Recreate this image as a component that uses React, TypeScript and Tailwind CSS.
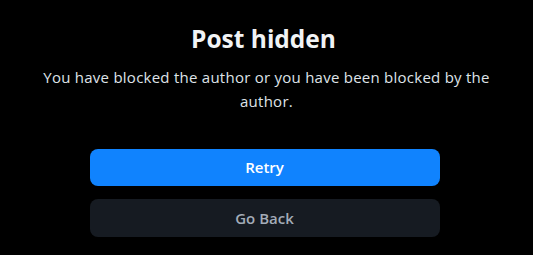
export default function App() {
  return (
    <div className="w-[533px] h-[255px] bg-black flex flex-col items-center pt-[22px] font-['Open_Sans',sans-serif]">
      <h1 className="text-[24.5px] leading-[34px] font-bold text-[#f1f3f5] tracking-[0px] -translate-x-[3px]">Post hidden</h1>
      <p className="mt-[9px] px-[36px] text-center text-[15px] leading-[24px] tracking-[0.25px] text-[#dfe3e8]">
        You have blocked the author or you have been blocked by the author.
      </p>
      <div className="mt-[36px] w-[350px] flex flex-col gap-[13px] -translate-x-[2px]">
        <button className="h-[37px] rounded-[8px] bg-[#1083fe] text-white text-[15px] font-semibold">Retry</button>
        <button className="h-[38px] rounded-[8px] bg-[#161b22] text-[#a3acb8] text-[15px] font-semibold">Go Back</button>
      </div>
    </div>
  );
}
